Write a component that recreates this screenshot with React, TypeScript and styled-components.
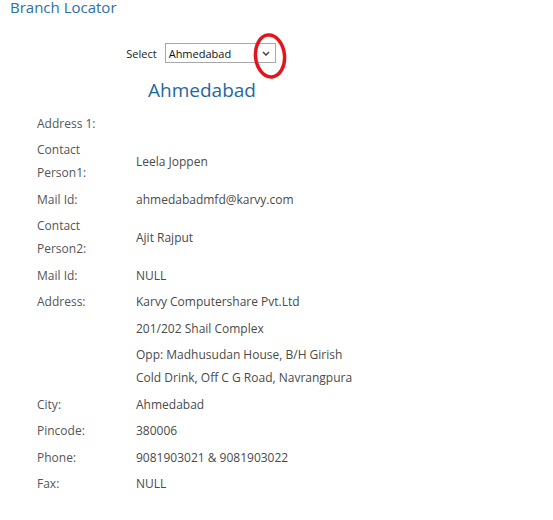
import React from 'react';
import styled, { createGlobalStyle } from 'styled-components';

const GlobalStyle = createGlobalStyle`
  html, body {
    margin: 0;
    padding: 0;
    background: #ffffff;
  }
  body {
    font-family: "Open Sans", "Noto Sans", Arial, sans-serif;
    color: #4d4d4d;
  }
`;

const Page = styled.div`
  width: 404px;
  padding: 0 0 20px 0;
`;

const Title = styled.h1`
  margin: 0 0 0 10px;
  font-size: 15px;
  line-height: 15px;
  font-weight: 400;
  color: #2d6fa9;
`;

const SelectRow = styled.div`
  display: flex;
  justify-content: center;
  align-items: center;
  gap: 8px;
  margin-top: 28px;
  padding-right: 2px;
`;

const SelectLabel = styled.label`
  font-size: 11px;
  color: #222;
`;

const SelectWrap = styled.div`
  position: relative;
`;

const SelectBox = styled.div`
  display: flex;
  align-items: center;
  justify-content: space-between;
  box-sizing: border-box;
  width: 111px;
  height: 20px;
  padding: 0 5px 0 3px;
  border: 1px solid #a9a9a9;
  background: #fff;
  font-size: 11px;
  color: #111;
`;

const Chevron = styled.svg`
  width: 8px;
  height: 5px;
`;

const Highlight = styled.svg`
  position: absolute;
  left: 88px;
  top: -10px;
  width: 34px;
  height: 46px;
  pointer-events: none;
`;

const CityHeading = styled.h2`
  margin: 15px 0 0 0;
  text-align: center;
  font-size: 19px;
  line-height: 24px;
  font-weight: 400;
  color: #1f67a3;
`;

const InfoTable = styled.div`
  display: grid;
  grid-template-columns: 99px auto;
  margin: 8px 0 0 37px;
  font-size: 12px;
  line-height: 23px;
`;

const Cell = styled.div<{ $label?: boolean }>`
  display: flex;
  align-items: center;
  padding: 1.75px 0;
  color: ${p => (p.$label ? '#555' : '#4a4a4a')};
`;

type Row = { label: string[]; value: string[] };

const rows: Row[] = [
  { label: ['Address 1:'], value: [] },
  { label: ['Contact', 'Person1:'], value: ['Leela Joppen'] },
  { label: ['Mail Id:'], value: ['ahmedabadmfd@karvy.com'] },
  { label: ['Contact', 'Person2:'], value: ['Ajit Rajput'] },
  { label: ['Mail Id:'], value: ['NULL'] },
  { label: ['Address:'], value: ['Karvy Computershare Pvt.Ltd'] },
  { label: [], value: ['201/202 Shail Complex'] },
  { label: [], value: ['Opp: Madhusudan House, B/H Girish', 'Cold Drink, Off C G Road, Navrangpura'] },
  { label: ['City:'], value: ['Ahmedabad'] },
  { label: ['Pincode:'], value: ['380006'] },
  { label: ['Phone:'], value: ['9081903021 & 9081903022'] },
  { label: ['Fax:'], value: ['NULL'] },
];

const Lines: React.FC<{ lines: string[] }> = ({ lines }) => (
  <div>
    {lines.length === 0 ? '\u00a0' : lines.map((l, i) => <div key={i}>{l}</div>)}
  </div>
);

export default function App() {
  return (
    <Page>
      <GlobalStyle />
      <Title>Branch Locator</Title>

      <SelectRow>
        <SelectLabel>Select</SelectLabel>
        <SelectWrap>
          <SelectBox>
            <span>Ahmedabad</span>
            <Chevron viewBox="0 0 8 5">
              <path d="M1 1 L4 4 L7 1" fill="none" stroke="#444" strokeWidth="1.5" />
            </Chevron>
          </SelectBox>
          <Highlight viewBox="0 0 34 46">
            <ellipse cx="17" cy="23" rx="14.5" ry="21" fill="none" stroke="#e3141c" strokeWidth="3.5" transform="rotate(-6 17 23)" />
          </Highlight>
        </SelectWrap>
      </SelectRow>

      <CityHeading>Ahmedabad</CityHeading>

      <InfoTable>
        {rows.map((r, i) => (
          <React.Fragment key={i}>
            <Cell $label>
              <Lines lines={r.label} />
            </Cell>
            <Cell>
              <Lines lines={r.value} />
            </Cell>
          </React.Fragment>
        ))}
      </InfoTable>
    </Page>
  );
}
